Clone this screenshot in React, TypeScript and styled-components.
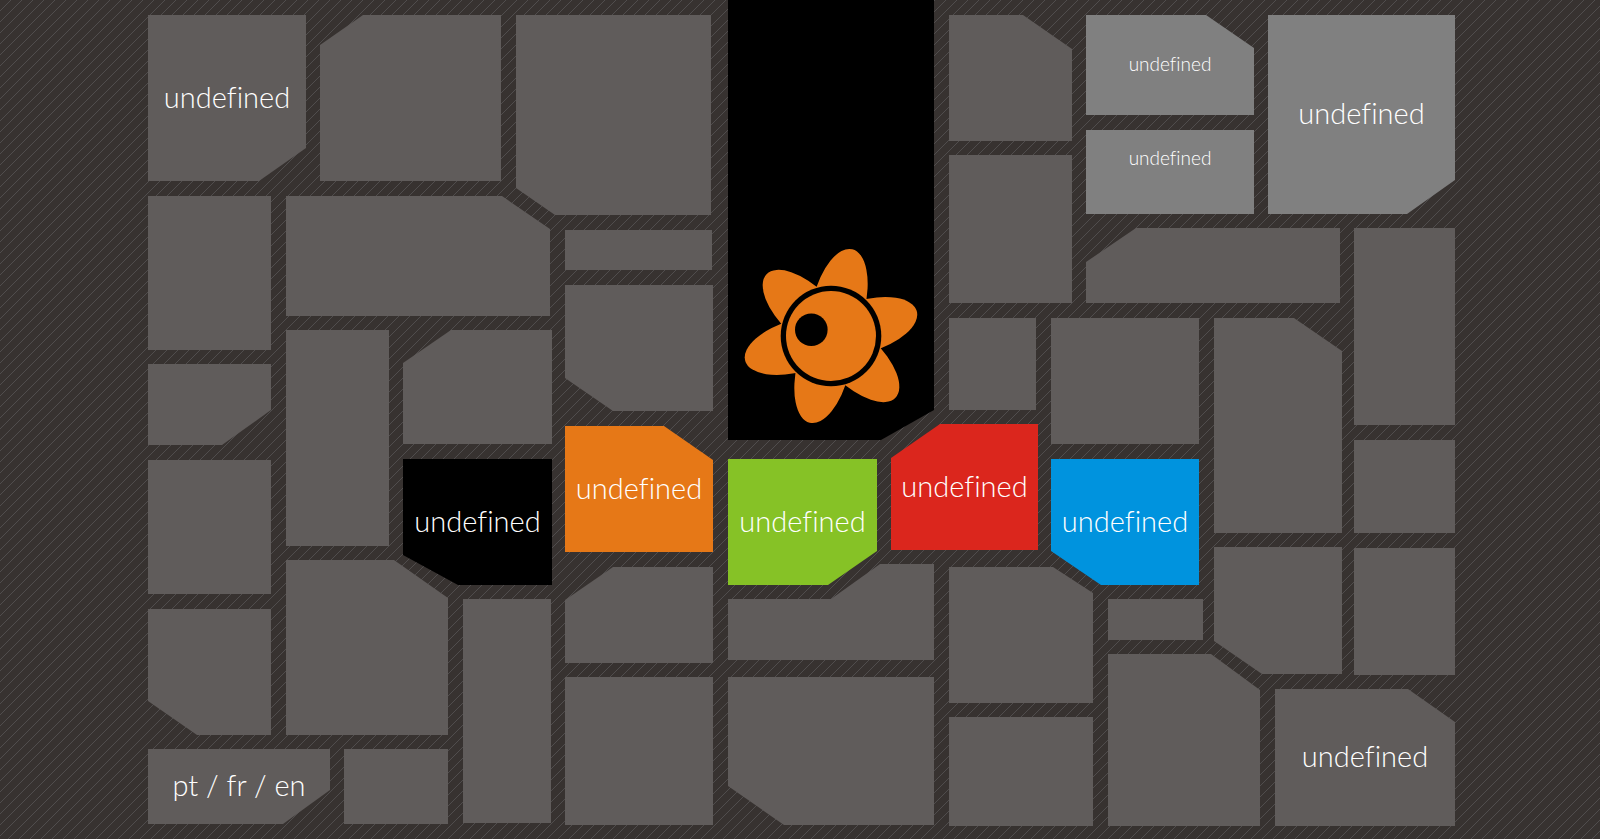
import React from "react";
import styled, { createGlobalStyle } from "styled-components";

/* 11px hatch tile: a single one-pixel diagonal */
const hatch = (() => {
  const d = Array.from({ length: 11 }, (_, i) => `M${10 - i} ${i}h1v1h-1z`).join("");
  const svg = `<svg xmlns='http://www.w3.org/2000/svg' width='11' height='11' shape-rendering='crispEdges'><path fill='#504d4d' d='${d}'/></svg>`;
  return `url("data:image/svg+xml,${encodeURIComponent(svg)}")`;
})();

const GlobalStyle = createGlobalStyle`
  *, *::before, *::after { box-sizing: border-box; }
  body {
    margin: 0;
    background: #373230 ${hatch};
    font-family: Lato, "Open Sans", sans-serif;
    font-weight: 300;
    font-variant-ligatures: none;
    color: #fff;
  }
`;

/* Each track runs from the start of one tile to the start of the next;
   the gutters are the tiles' own margins. */
const columns = [138, 34, 24, 59, 60, 53, 49, 163, 163, 58, 102, 35, 22, 106, 54, 7, 79, 116];
const rows = [
  15, 115, 25, 41, 32, 2, 55, 33, 12, 34, 60, 2, 14, 19, 1, 87, 1, 12, 4, 3, 32, 10, 45, 23, 12, 28, 32, 90,
];

const Board = styled.main`
  display: grid;
  min-width: 1100px;
  padding: 0 130px 0 148px;
  grid-template-columns: ${columns.map((n) => `minmax(0, ${n}fr)`).join(" ")};
  grid-template-rows: ${rows.map((n) => `${n}px`).join(" ")};
`;

type Corner = "tl" | "tr" | "br" | "bl" | "step";
type Cut = [corner: Corner, width: number, height: number];

const outline = ([corner, w, h]: Cut) => {
  switch (corner) {
    case "tl":
      return `polygon(0 ${h}px, ${w}px 0, 100% 0, 100% 100%, 0 100%)`;
    case "tr":
      return `polygon(0 0, calc(100% - ${w}px) 0, 100% ${h}px, 100% 100%, 0 100%)`;
    case "br":
      return `polygon(0 0, 100% 0, 100% calc(100% - ${h}px), calc(100% - ${w}px) 100%, 0 100%)`;
    case "bl":
      return `polygon(0 0, 100% 0, 100% 100%, ${w}px 100%, 0 calc(100% - ${h}px))`;
    case "step":
      return `polygon(0 ${h}px, 50% ${h}px, calc(50% + ${w}px) 0, 100% 0, 100% 100%, 0 100%)`;
  }
};

const tones = {
  stone: "#605c5b",
  grey: "#808080",
  black: "#000000",
  orange: "#e67817",
  green: "#86c226",
  red: "#db261d",
  blue: "#0093de",
};

interface TileProps {
  $col: [number, number];
  $row: [number, number];
  $gap?: [number, number];
  $cut?: Cut;
  $tone?: keyof typeof tones;
}

const Tile = styled.div<TileProps>`
  grid-column: ${(p) => p.$col.join(" / ")};
  grid-row: ${(p) => p.$row.join(" / ")};
  margin: 0 ${(p) => p.$gap?.[0] ?? 15}px ${(p) => p.$gap?.[1] ?? 14}px 0;
  background: ${(p) => tones[p.$tone ?? "stone"]};
  clip-path: ${(p) => (p.$cut ? outline(p.$cut) : "none")};
`;

const LinkTile = styled(Tile)<{ $small?: boolean; $raised?: boolean }>`
  display: flex;
  align-items: center;
  justify-content: center;
  padding-bottom: ${(p) => (p.$raised ? 30 : 4)}px;
  color: inherit;
  font-size: ${(p) => (p.$small ? 19 : 29)}px;
  line-height: 1;
  white-space: nowrap;
  text-decoration: none;
`;

const LogoTile = styled(Tile)`
  display: flex;
  align-items: flex-end;
  justify-content: center;
  padding-bottom: 14px;
`;

const Flower = () => (
  <svg width="180" height="180" viewBox="-90 -90 180 180" role="img" aria-label="Flower">
    <g fill="#e67817">
      {[0, 60, 120, 180, 240, 300].map((turn) => (
        <ellipse key={turn} cy="-33.3" rx="26.2" ry="56" transform={`rotate(${turn + 13.8})`} />
      ))}
    </g>
    <circle r="50.3" />
    <circle r="45" fill="#e67817" />
    <circle cx="-19.7" cy="-6.2" r="16.3" />
  </svg>
);

const plainTiles: TileProps[] = [
  { $col: [3, 7], $row: [2, 5], $gap: [15, 15], $cut: ["tl", 43, 30] },
  { $col: [7, 9], $row: [2, 7], $gap: [17, 15], $cut: ["bl", 39, 27] },
  { $col: [1, 2], $row: [5, 11] },
  { $col: [2, 8], $row: [5, 10], $cut: ["tr", 48, 33] },
  { $col: [8, 9], $row: [7, 8], $gap: [16, 15] },
  { $col: [8, 9], $row: [8, 13], $gap: [15, 15], $cut: ["bl", 48, 33] },
  { $col: [1, 2], $row: [11, 16], $gap: [15, 15], $cut: ["br", 49, 35] },
  { $col: [2, 5], $row: [10, 19], $gap: [14, 14] },
  { $col: [5, 8], $row: [10, 15], $gap: [13, 15], $cut: ["tl", 48, 33] },
  { $col: [1, 2], $row: [16, 23], $gap: [15, 15] },
  { $col: [1, 2], $row: [23, 28], $cut: ["bl", 49, 34] },
  { $col: [2, 6], $row: [19, 28], $cut: ["tr", 54, 38] },
  { $col: [4, 6], $row: [28, 29], $gap: [15, 15] },
  { $col: [6, 8], $row: [22, 29], $gap: [14, 16] },
  { $col: [8, 9], $row: [21, 25], $cut: ["tl", 48, 33] },
  { $col: [8, 9], $row: [25, 29] },
  { $col: [9, 11], $row: [20, 25], $gap: [15, 17], $cut: ["step", 49, 35] },
  { $col: [9, 11], $row: [25, 29], $cut: ["bl", 56, 39] },
  { $col: [11, 13], $row: [2, 4], $gap: [14, 14], $cut: ["tr", 49, 34] },
  { $col: [11, 13], $row: [4, 9], $gap: [14, 15] },
  { $col: [13, 18], $row: [6, 9], $gap: [14, 15], $cut: ["tl", 50, 34] },
  { $col: [18, 19], $row: [6, 14], $gap: [15, 15] },
  { $col: [11, 12], $row: [9, 12] },
  { $col: [12, 15], $row: [9, 15], $gap: [15, 15] },
  { $col: [15, 18], $row: [9, 17], $gap: [12, 14], $cut: ["tr", 48, 33] },
  { $col: [18, 19], $row: [14, 18], $gap: [15, 15] },
  { $col: [15, 18], $row: [17, 26], $gap: [12, 15], $cut: ["bl", 48, 33] },
  { $col: [18, 19], $row: [18, 26] },
  { $col: [11, 14], $row: [21, 27], $cut: ["tr", 40, 26] },
  { $col: [14, 15], $row: [22, 24], $gap: [11, 14] },
  { $col: [14, 17], $row: [24, 29], $gap: [15, 13], $cut: ["tr", 49, 36] },
  { $col: [11, 14], $row: [27, 29], $gap: [15, 13] },
];

interface LinkItem extends TileProps {
  label: string;
  $small?: boolean;
  $raised?: boolean;
}

const linkTiles: LinkItem[] = [
  { label: "undefined", $col: [1, 3], $row: [2, 5], $gap: [14, 15], $cut: ["br", 47, 33] },
  { label: "undefined", $col: [13, 16], $row: [2, 3], $gap: [14, 15], $cut: ["tr", 48, 33], $tone: "grey", $small: true },
  { label: "undefined", $col: [13, 16], $row: [3, 6], $gap: [14, 14], $tone: "grey", $small: true, $raised: true },
  { label: "undefined", $col: [16, 19], $row: [2, 6], $cut: ["br", 48, 34], $tone: "grey" },
  { label: "undefined", $col: [5, 8], $row: [15, 22], $gap: [13, 14], $cut: ["bl", 55, 30], $tone: "black" },
  { label: "undefined", $col: [8, 9], $row: [13, 21], $gap: [15, 15], $cut: ["tr", 49, 34], $tone: "orange" },
  { label: "undefined", $col: [9, 10], $row: [15, 22], $gap: [14, 14], $cut: ["br", 49, 34], $tone: "green" },
  { label: "undefined", $col: [10, 12], $row: [12, 20], $gap: [13, 14], $cut: ["tl", 49, 34], $tone: "red" },
  { label: "undefined", $col: [12, 15], $row: [15, 22], $cut: ["bl", 50, 34], $tone: "blue" },
  { label: "pt / fr / en", $col: [1, 4], $row: [28, 29], $gap: [14, 15], $cut: ["br", 47, 34] },
  { label: "undefined", $col: [17, 19], $row: [26, 29], $gap: [15, 13], $cut: ["tr", 47, 33] },
];

export default function App() {
  return (
    <>
      <GlobalStyle />
      <Board>
        {plainTiles.map((tile, i) => (
          <Tile key={i} {...tile} />
        ))}
        <LogoTile $col={[9, 11]} $row={[1, 15]} $gap={[15, 19]} $cut={["br", 53, 30]} $tone="black">
          <Flower />
        </LogoTile>
        {linkTiles.map(({ label, ...tile }, i) => (
          <LinkTile key={i} as="a" href="#" {...tile}>
            {label}
          </LinkTile>
        ))}
      </Board>
    </>
  );
}
